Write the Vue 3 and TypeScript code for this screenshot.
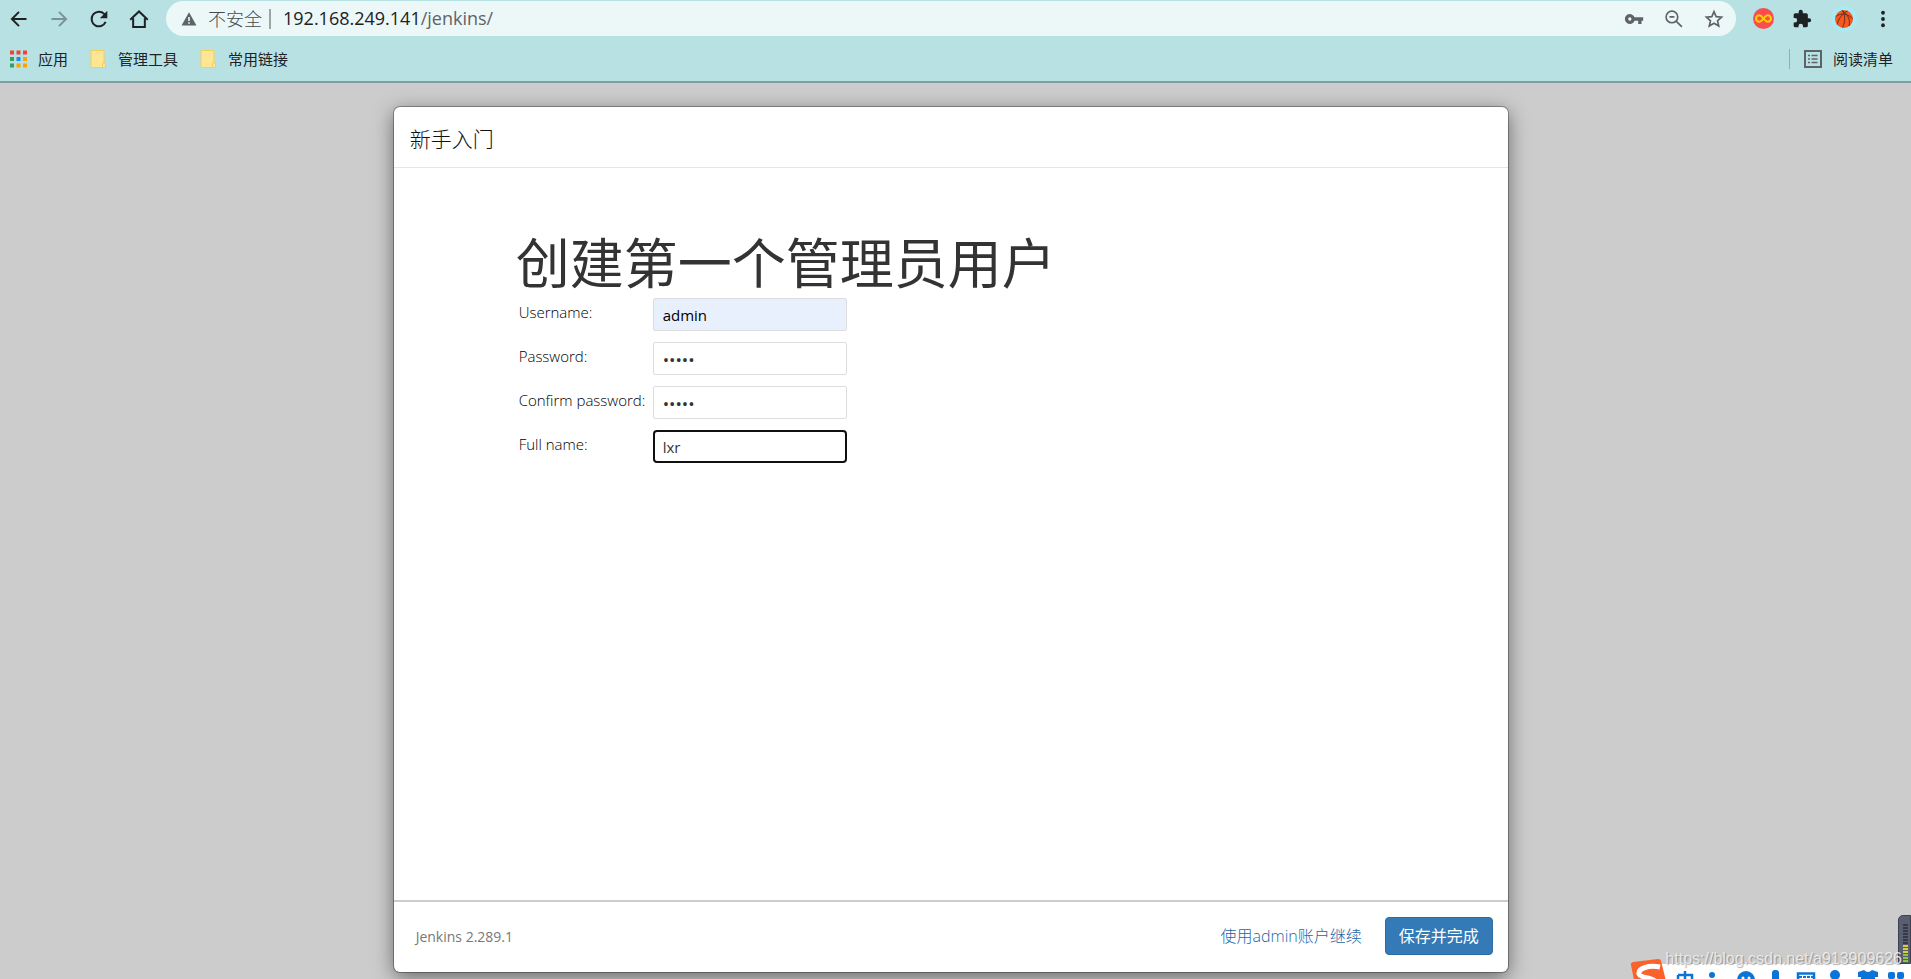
<script setup lang="ts">
import { ref } from 'vue'

interface Field {
  id: string
  label: string
  type: string
  value: string
  state: string
}

const host = '192.168.249.141'
const path = '/jenkins/'
const bookmarks: string[] = ['管理工具', '常用链接']
const appColors: string[] = [
  '#f44336', '#f44336', '#f44336',
  '#34a060', '#1e88f5', '#fba400',
  '#34a060', '#fba400', '#fba400',
]
const fields = ref<Field[]>([
  { id: 'username', label: 'Username:', type: 'text', value: 'admin', state: 'autofilled' },
  { id: 'password', label: 'Password:', type: 'password', value: 'admin', state: '' },
  { id: 'confirm', label: 'Confirm password:', type: 'password', value: 'admin', state: '' },
  { id: 'fullname', label: 'Full name:', type: 'text', value: 'lxr', state: 'active' },
])
const meter: number[] = Array.from({ length: 14 }, (_, i) => i)
function meterClass(i: number): string {
  return i < 7 ? 'off' : i < 10 ? 'mid' : 'on'
}
</script>

<template>
  <div class="page">
    <header class="chrome">
      <div class="toolbar">
        <nav class="nav">
          <button type="button" aria-label="后退">
            <svg viewBox="0 0 24 24"><path d="M21 12H4M12 3.500L3.500 12l8.500 8.500" /></svg>
          </button>
          <button type="button" aria-label="前进" class="dim">
            <svg viewBox="0 0 24 24"><path d="M3 12h17M12 3.500l8.500 8.500-8.500 8.500" /></svg>
          </button>
          <button type="button" aria-label="重新加载">
            <svg viewBox="0 0 24 24"><path d="M20 15.500A8.800 8.800 0 1 1 18.200 5.800L20 8" /><path class="solid" d="M22 2v9h-9z" /></svg>
          </button>
          <button type="button" aria-label="主页">
            <svg viewBox="0 0 24 24"><path d="M1.500 13L12 3l10.500 10M5 11v10.500h14V11" /></svg>
          </button>
        </nav>
        <div class="omnibox">
          <svg class="warn" viewBox="0 0 16 16"><path d="M8 1.200L15.500 14.500H.5z" /><path class="mark" d="M7.200 6h1.600v4H7.200zM7.200 11.200h1.600v1.600H7.200z" /></svg>
          <span class="insecure">不安全</span>
          <span class="bar"></span>
          <div class="url" role="textbox" aria-label="地址">
            <span>{{ host }}</span><span class="path">{{ path }}</span>
          </div>
          <div class="omni-icons">
            <button type="button" aria-label="密码">
              <svg viewBox="0 0 24 24"><path class="solid" fill-rule="evenodd" d="M12.650 10A6 6 0 1 0 12.650 14H17v4h4v-4h2v-4zM7 14a2 2 0 1 1 0-4 2 2 0 0 1 0 4z" /></svg>
            </button>
            <button type="button" aria-label="缩小">
              <svg viewBox="0 0 24 24"><circle cx="9.500" cy="9.500" r="7" /><path d="M14.500 14.500l7 7M6.500 9.500h6" /></svg>
            </button>
            <button type="button" aria-label="收藏">
              <svg viewBox="0 0 24 24"><path d="M12 3.200l2.600 6 6.500.6-4.900 4.300 1.500 6.400L12 17.100l-5.700 3.400 1.500-6.400L2.900 9.800l6.500-.6z" /></svg>
            </button>
          </div>
        </div>
        <div class="extensions">
          <button type="button" aria-label="扩展">
            <svg class="infinity" viewBox="0 0 20 20"><circle cx="10" cy="10" r="10" /><path d="M10 10C8.500 7.800 7.500 6.900 6 6.900a3.100 3.100 0 0 0 0 6.200C7.500 13.100 8.500 12.200 10 10S12.500 6.900 14 6.900a3.100 3.100 0 0 1 0 6.200C12.500 13.100 11.500 12.200 10 10z" /></svg>
          </button>
          <button type="button" aria-label="扩展程序">
            <svg class="puzzle" viewBox="0 0 24 24"><path d="M20.500 11H19V7a2 2 0 0 0-2-2h-4V3.500a2.500 2.500 0 0 0-5 0V5H4a2 2 0 0 0-2 2v3.800h1.500a2.700 2.700 0 0 1 0 5.400H2V20a2 2 0 0 0 2 2h3.800v-1.500a2.700 2.700 0 0 1 5.400 0V22H17a2 2 0 0 0 2-2v-4h1.500a2.500 2.500 0 0 0 0-5z" /></svg>
          </button>
          <button type="button" aria-label="用户">
            <svg class="avatar" viewBox="0 0 28 28"><circle class="halo" cx="14" cy="14" r="13" /><circle class="ball" cx="14" cy="14" r="9" /><path d="M6 11.500C10 8 17 8 22.500 13.500M7 19.500C9 13 12 9 17.500 6M12.500 22.500C15.500 17 15.500 9 12 5.500M19 21C20.500 15 18 9 12 5.500" /></svg>
          </button>
          <button type="button" aria-label="菜单">
            <svg class="dots" viewBox="0 0 24 24"><circle cx="12" cy="4.500" r="2.300" /><circle cx="12" cy="12" r="2.300" /><circle cx="12" cy="19.500" r="2.300" /></svg>
          </button>
        </div>
      </div>
      <div class="bookmarks">
        <a href="#" class="bookmark">
          <svg viewBox="0 0 17 17">
            <rect v-for="(c, i) in appColors" :key="i" :x="(i % 3) * 6.500" :y="Math.floor(i / 3) * 6.500" width="4" height="4" :fill="c" />
          </svg>应用
        </a>
        <a v-for="b in bookmarks" :key="b" href="#" class="bookmark">
          <svg viewBox="0 0 17 18"><path class="folder" d="M1 .5h13v12h1.500v5H1z" /><path class="folder" d="M12.500 17v-3a1.500 1.500 0 0 1 3 0v3.500h-3" /></svg>{{ b }}
        </a>
        <a href="#" class="reading">
          <svg viewBox="0 0 18 18"><rect x="1" y="1" width="16" height="16" /><path d="M4 5.500h2M7.500 5.500h6M4 9h2M7.500 9h6M4 12.500h2M7.500 12.500h6" /></svg>阅读清单
        </a>
      </div>
    </header>

    <main class="backdrop">
      <form class="modal" @submit.prevent>
        <h4 class="modal-title">新手入门</h4>
        <section class="modal-body">
          <h1>创建第一个管理员用户</h1>
          <div class="fields">
            <template v-for="f in fields" :key="f.id">
              <label :for="f.id">{{ f.label }}</label>
              <input :id="f.id" v-model="f.value" :type="f.type" :class="f.state" />
            </template>
          </div>
        </section>
        <footer class="modal-footer">
          <span class="version">Jenkins 2.289.1</span>
          <button type="button" class="link">使用admin账户继续</button>
          <button type="submit" class="primary">保存并完成</button>
        </footer>
      </form>
    </main>

    <div class="meter">
      <i v-for="i in meter" :key="i" :class="meterClass(i)"></i>
    </div>
    <svg class="ime" viewBox="0 0 283 20">
      <rect class="panel" x="20" y="5" width="263" height="20" />
      <path class="logo" d="M3 6Q2 4 5 3L30 0q3 0 3 2l6 24H7z" />
      <path class="swirl" d="M32 8C21 6 10 9 11 15c1 4 12 3 16 7" />
      <g class="glyphs">
        <path class="line" d="M57 12v10M50 16h14v6M50 22v-6" />
        <circle cx="84" cy="16" r="3" />
        <circle cx="118" cy="21" r="9" />
        <circle class="eye" cx="115" cy="19" r="1.500" /><circle class="eye" cx="121" cy="19" r="1.500" />
        <rect x="144" y="11" width="7" height="14" rx="3" />
        <path class="line" d="M170 24v-9.500h16V24" />
        <path class="line keys" d="M171 18h14" />
        <circle cx="207" cy="16" r="5" />
        <path d="M230 13l6-2q4 4 8 0l6 2v5h-3v6h-14v-6h-3z" />
        <rect x="260" y="13" width="7" height="7" rx="2" /><rect x="269" y="13" width="7" height="7" rx="2" />
      </g>
    </svg>
    <span class="watermark">https://blog.csdn.net/a913909626</span>
  </div>
</template>

<style>
body {
  margin: 0;
}
</style>

<style scoped>
.page {
  position: relative;
  display: flex;
  flex-direction: column;
  min-height: 100vh;
  box-sizing: border-box;
  overflow: hidden;
  background: #ccc;
  color: #333;
  font-family: "Open Sans", "Noto Sans CJK SC", sans-serif;
  font-size: 15px;
}
button {
  margin: 0;
  padding: 0;
  border: 0;
  background: none;
  font: inherit;
}
svg {
  display: block;
  flex: none;
}
a {
  color: inherit;
  text-decoration: none;
}
.chrome {
  background: #b8e1e4;
  border-bottom: 2px solid #7fa0a3;
  color: #202124;
}
.toolbar {
  display: flex;
  align-items: center;
  height: 37px;
  padding-right: 18px;
}
.nav {
  display: flex;
  gap: 20px;
  padding-left: 9px;
}
.nav svg,
.omni-icons svg {
  width: 20px;
  height: 20px;
  fill: none;
  stroke: #202124;
  stroke-width: 2.4;
}
.nav .dim {
  opacity: 0.4;
}
.nav svg .solid {
  fill: #202124;
  stroke: none;
}
.omnibox {
  display: flex;
  flex: 1;
  align-items: center;
  height: 35px;
  margin-left: 17px;
  padding: 0 12px 0 15px;
  border-radius: 18px;
  background: #ecf8f8;
  font-size: 18px;
}
.warn {
  width: 16px;
  height: 16px;
  fill: #5f6368;
}
.warn .mark {
  fill: #ecf8f8;
}
.insecure {
  margin-left: 11px;
  padding-bottom: 2px;
  color: #45484c;
  font-weight: 300;
}
.bar {
  width: 2px;
  height: 20px;
  margin: 0 12px 0 7px;
  background: #9aa5a8;
}
.url {
  flex: 1;
  padding-bottom: 2px;
}
.path {
  color: #5f6368;
}
.omni-icons {
  display: flex;
  gap: 20px;
}
.omni-icons svg {
  stroke: #5f6368;
  stroke-width: 2;
}
.omni-icons .solid {
  fill: #5f6368;
  stroke: none;
}
.extensions {
  display: flex;
  align-items: center;
  margin-left: 17px;
  gap: 18px;
}
.infinity {
  width: 21px;
  height: 21px;
  fill: #fb4d4f;
}
.infinity path {
  fill: none;
  stroke: #fdd000;
  stroke-width: 2;
}
.puzzle,
.dots {
  width: 20px;
  height: 20px;
  fill: #202124;
}
.avatar {
  width: 28px;
  height: 28px;
  fill: none;
}
.avatar .halo {
  fill: #a8ebf5;
}
.avatar .ball {
  fill: #f9571c;
}
.avatar path {
  stroke: #6b3020;
  stroke-width: 1;
}
.extensions button:last-child {
  margin-left: -3px;
}
.bookmarks {
  display: flex;
  align-items: center;
  height: 44px;
  padding: 0 18px 0 10px;
}
.bookmark,
.reading {
  display: flex;
  align-items: center;
  gap: 11px;
  margin-right: 22px;
  line-height: 20px;
}
.bookmark svg {
  width: 17px;
  height: 18px;
}
.folder {
  fill: #ffe694;
  stroke: #f2cf59;
}
.reading {
  margin: 0 0 0 auto;
  padding-left: 14px;
  border-left: 1px solid #8fb0b3;
}
.reading svg {
  width: 18px;
  height: 18px;
  fill: none;
  stroke: #5f6368;
  stroke-width: 2;
}
.reading path {
  stroke-width: 1.4;
}
.backdrop {
  display: flex;
  flex: 1;
  padding: 24px 21.1% 7px 20.6%;
}
.modal {
  display: flex;
  flex: 1;
  flex-direction: column;
  border-radius: 6px;
  background: #fff;
  box-shadow: 0 0 0 1px rgba(0, 0, 0, 0.3), 0 5px 20px rgba(0, 0, 0, 0.5);
}
.modal-title {
  margin: 0;
  padding: 18px 16px 14px;
  border-bottom: 1px solid #e5e5e5;
  font-size: 21px;
  font-weight: 300;
  line-height: 28px;
  color: #111;
}
.modal-body {
  flex: 1;
  padding: 62px 122px;
}
h1 {
  margin: 0 0 2px;
  font-size: 54px;
  font-weight: 400;
  line-height: 66px;
}
.fields {
  display: grid;
  grid-template-columns: 130px 194px;
  gap: 11px 4px;
  padding-left: 3px;
}
.fields label {
  line-height: 28px;
  white-space: nowrap;
  color: #000;
  font-weight: 300;
}
.fields input {
  box-sizing: border-box;
  width: 100%;
  height: 33px;
  padding: 1px 9px 0;
  border: 1px solid #ddd;
  border-radius: 2px;
  outline: none;
  background: #fff;
  color: #333;
  font: inherit;
}
.fields input[type="password"] {
  font-size: 17px;
}
.fields input.autofilled {
  background: #e8f0fe;
  color: #000;
}
.fields input.active {
  padding: 1px 8px 0;
  border: 2px solid #101010;
  border-radius: 4px;
}
.modal-footer {
  display: flex;
  align-items: center;
  box-sizing: border-box;
  height: 72px;
  padding: 0 15px 2px 22px;
  border-top: 2px solid #ccc;
}
.version {
  margin-right: auto;
  color: #777;
  font-size: 14px;
}
.link {
  padding-bottom: 2px;
  color: #1c66a8;
  font-size: 16px;
  font-weight: 300;
}
.primary {
  height: 38px;
  margin-left: 23px;
  padding: 0 13px 2px;
  border: 1px solid #2e6da4;
  border-radius: 4px;
  background: #337ab7;
  color: #fff;
  font-size: 16px;
}
.meter {
  position: absolute;
  right: 0;
  bottom: 15px;
  display: flex;
  flex-direction: column;
  gap: 1px;
  box-sizing: border-box;
  width: 13px;
  height: 49px;
  padding: 8px 2px 0 4px;
  overflow: hidden;
  border: 1px solid #3d4050;
  border-radius: 5px 0 0 0;
  background: #5a5f70;
}
.meter i {
  flex: none;
  height: 2px;
  background: #363a48;
}
.meter .mid {
  background: #d9cc45;
}
.meter .on {
  background: #86c840;
}
.ime {
  position: absolute;
  right: 0;
  bottom: 0;
  width: 283px;
  height: 20px;
}
.panel,
.glyphs .eye {
  fill: #fff;
}
.logo {
  fill: #f9632b;
}
.swirl {
  fill: none;
  stroke: #fff;
  stroke-width: 5;
}
.glyphs {
  fill: #0a74da;
}
.glyphs .line {
  fill: none;
  stroke: #0a74da;
  stroke-width: 2.5;
}
.glyphs .keys {
  stroke-dasharray: 3 1;
  stroke-width: 2;
}
.watermark {
  position: absolute;
  right: 9px;
  bottom: 11px;
  color: rgba(240, 240, 240, 0.9);
  font-family: "Liberation Sans", Arial, sans-serif;
  font-size: 16px;
  line-height: 18px;
  text-shadow: 1px 1px 1px rgba(0, 0, 0, 0.3);
}
</style>
